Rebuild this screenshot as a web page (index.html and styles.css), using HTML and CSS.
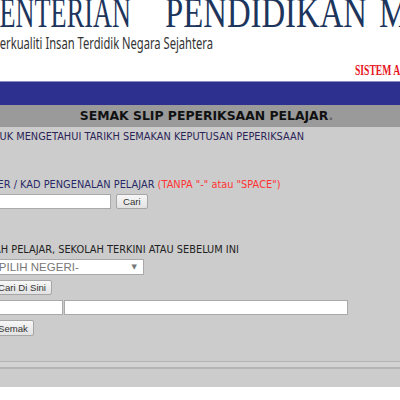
FILE: index.html
```html
<!DOCTYPE html>
<html lang="ms">
<head>
    <meta charset="UTF-8">
    <meta name="viewport" content="width=device-width, initial-scale=1.0">
    <title>Semak Slip Peperiksaan Pelajar - SAPS</title>
    <link rel="stylesheet" href="styles.css">
</head>
<body>
    <div class="page">
        <header class="masthead">
            <svg class="logo" width="400" height="81" viewBox="0 0 400 81">
                <text class="logo-title" x="-59" y="27" textLength="190" lengthAdjust="spacingAndGlyphs">KEMENTERIAN</text>
                <text class="logo-title" x="165" y="27" textLength="202" lengthAdjust="spacingAndGlyphs">PENDIDIKAN</text>
                <text class="logo-title" x="379" y="27" textLength="172" lengthAdjust="spacingAndGlyphs">MALAYSIA</text>
                <text class="logo-motto" x="-69" y="49" textLength="282" lengthAdjust="spacingAndGlyphs">Pendidikan Berkualiti Insan Terdidik Negara Sejahtera</text>
                <text class="logo-system" x="355" y="75" textLength="205" lengthAdjust="spacingAndGlyphs">SISTEM ANALISIS PEPERIKSAAN SEKOLAH</text>
            </svg>
        </header>

        <div class="navbar"></div>

        <h1 class="title-bar">SEMAK SLIP PEPERIKSAAN PELAJAR<span class="dot">.</span></h1>

        <main class="panel">
            <p class="note note-date">UNTUK MENGETAHUI TARIKH SEMAKAN KEPUTUSAN PEPERIKSAAN</p>

            <form class="search" onsubmit="return false">
                <label class="note note-id" for="nokp">NO. REGISTER / KAD PENGENALAN PELAJAR <span class="warn">(TANPA "-" atau "SPACE")</span></label>
                <div class="row">
                    <input class="field field-id" id="nokp" type="text">
                    <button class="btn btn-find" type="button">Cari</button>
                </div>

                <label class="note note-school" for="negeri">CARI SEKOLAH PELAJAR, SEKOLAH TERKINI ATAU SEBELUM INI</label>
                <div class="row">
                    <span class="select">
                        <select id="negeri">
                            <option>-PILIH NEGERI-</option>
                            <option>JOHOR</option>
                            <option>KEDAH</option>
                            <option>KELANTAN</option>
                            <option>MELAKA</option>
                            <option>NEGERI SEMBILAN</option>
                            <option>PAHANG</option>
                            <option>PERAK</option>
                            <option>PERLIS</option>
                            <option>PULAU PINANG</option>
                            <option>SABAH</option>
                            <option>SARAWAK</option>
                            <option>SELANGOR</option>
                            <option>TERENGGANU</option>
                            <option>WP KUALA LUMPUR</option>
                        </select>
                    </span>
                </div>
                <div class="row">
                    <button class="btn" type="button">Cari Di Sini</button>
                </div>
                <div class="row">
                    <input class="field field-code" type="text">
                    <input class="field field-name" type="text">
                </div>
                <div class="row">
                    <button class="btn btn-check" type="submit">Semak</button>
                </div>
            </form>
        </main>

        <div class="rule"></div>
        <footer class="foot"></footer>
    </div>
</body>
</html>
```

FILE: styles.css
```css
* {
    margin: 0;
    padding: 0;
    box-sizing: border-box;
}

html,
body {
    overflow: hidden;
}

body {
    background: #fff;
    font-family: "DejaVu Sans", Verdana, sans-serif;
    color: #222;
}

.masthead {
    height: 81px;
}

.logo {
    display: block;
}

.logo-title {
    font-family: "Liberation Serif", serif;
    font-size: 42px;
    fill: #1d355c;
}

.logo-motto {
    font-family: "Noto Sans", sans-serif;
    font-size: 15.5px;
    fill: #333;
}

.logo-system {
    font-family: "Liberation Serif", serif;
    font-size: 15px;
    font-weight: bold;
    fill: #e8141c;
}

.navbar {
    height: 24px;
    background: #2d308f;
    border-top: 1px solid #8a8cc4;
}

.title-bar {
    height: 22px;
    padding-left: 13px;
    background: #9a9a9a;
    color: #111;
    font-size: 12.4px;
    font-weight: bold;
    line-height: 22px;
    text-align: center;
    white-space: nowrap;
}

.title-bar .dot {
    color: #666;
}

.panel {
    background: #ccc;
    padding: 4px 0 25px;
    font-size: 9.8px;
    line-height: 12px;
}

.note {
    display: block;
    white-space: nowrap;
}

.note-date {
    color: #2b2457;
    text-indent: -21px;
    margin-bottom: 36px;
}

.note-id {
    color: #2a2a66;
    text-indent: -59px;
}

.warn {
    color: #ff3333;
}

.note-school {
    color: #222;
    text-indent: -64px;
    margin-top: 35px;
}

.row {
    display: flex;
    margin-left: -8px;
    margin-top: 5px;
}

.note + .row {
    margin-top: 3px;
}

.field {
    height: 15px;
    background: #fff;
    border: 1px solid #a9a9a9;
    outline: none;
}

.field-id {
    width: 119px;
}

.field-code {
    width: 71px;
}

.field-name {
    width: 284px;
    margin-left: 1px;
}

.btn {
    height: 15px;
    padding: 0 5px;
    background: linear-gradient(#f7f7f7, #e2e2e2);
    border: 1px solid #a6a6a6;
    border-radius: 2px;
    color: #333;
    font-family: "Liberation Sans", Arial, sans-serif;
    font-size: 9.6px;
    line-height: 13px;
    cursor: pointer;
}

.btn-find {
    margin-left: 5px;
    padding: 0 6px;
}

.btn-check {
    height: 16px;
}

.select {
    position: relative;
    display: block;
    width: 152px;
    height: 16px;
    background: #fff;
    border: 1px solid #a9a9a9;
}

.select select {
    width: 100%;
    height: 100%;
    padding-left: 2px;
    border: 0;
    background: transparent;
    color: #777;
    font-family: "Liberation Sans", Arial, sans-serif;
    font-size: 11.5px;
    appearance: none;
    -webkit-appearance: none;
    outline: none;
}

.select::after {
    content: "\25BC";
    position: absolute;
    right: 6px;
    top: 3px;
    color: #777;
    font-size: 7px;
    line-height: 8px;
    pointer-events: none;
}

.rule {
    height: 8px;
    background: #d3d3d3;
    border-top: 1px solid #b4b4b4;
    border-bottom: 2px solid #b4b4b4;
}

.foot {
    height: 18px;
    background: #ccc;
}
```
